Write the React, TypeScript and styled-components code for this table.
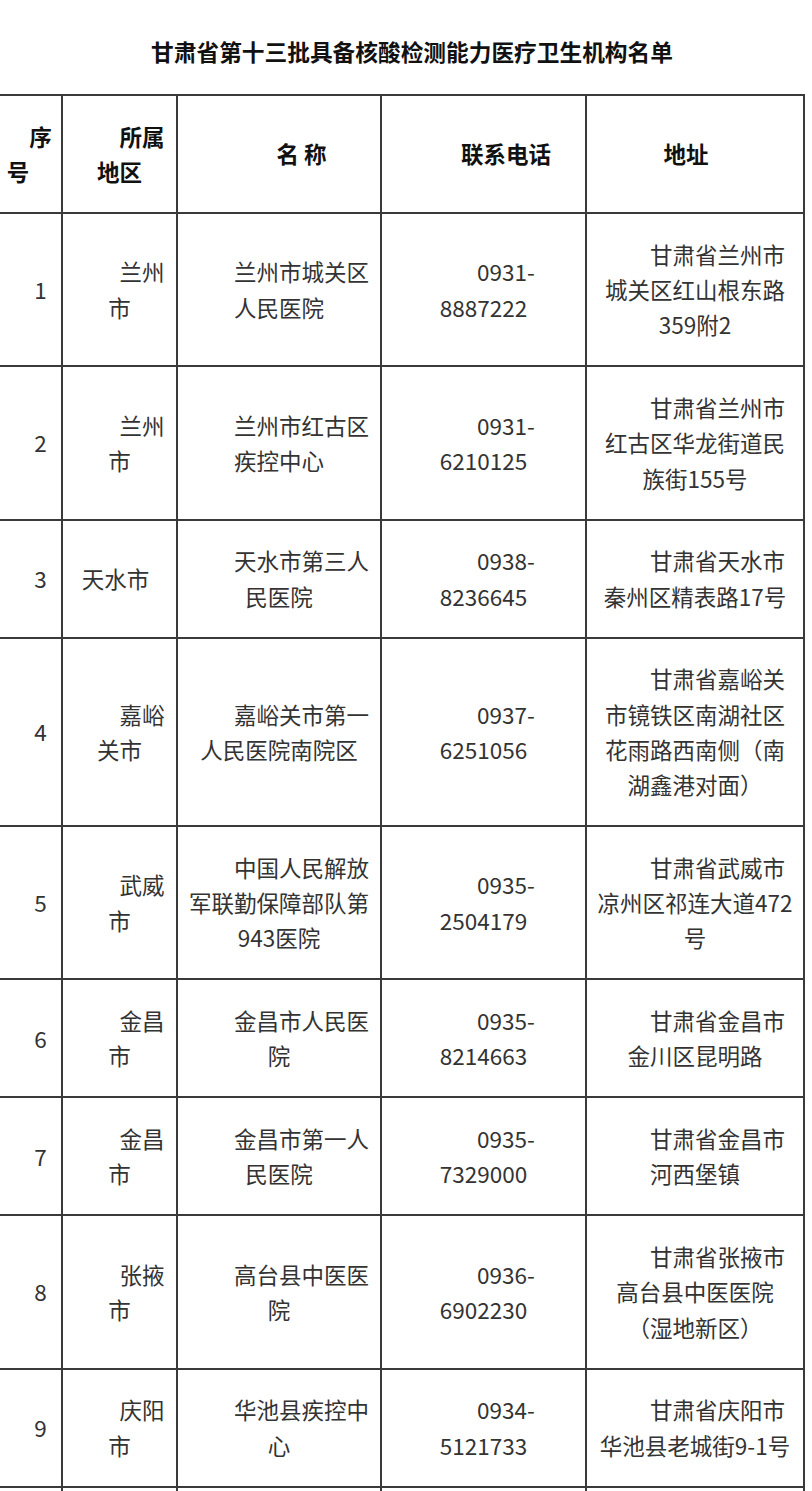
import React from 'react';
import styled, { createGlobalStyle } from 'styled-components';

type Row = {
  no: string;
  region: string;
  regionIndent?: number;
  name: string;
  phone: string;
  address: string;
};

const rows: Row[] = [
  { no: '1', region: '兰州市', name: '兰州市城关区人民医院', phone: '0931-8887222', address: '甘肃省兰州市城关区红山根东路359附2' },
  { no: '2', region: '兰州市', name: '兰州市红古区疾控中心', phone: '0931-6210125', address: '甘肃省兰州市红古区华龙街道民族街155号' },
  { no: '3', region: '天水市', regionIndent: -0.35, name: '天水市第三人民医院', phone: '0938-8236645', address: '甘肃省天水市秦州区精表路17号' },
  { no: '4', region: '嘉峪关市', name: '嘉峪关市第一人民医院南院区', phone: '0937-6251056', address: '甘肃省嘉峪关市镜铁区南湖社区花雨路西南侧（南湖鑫港对面）' },
  { no: '5', region: '武威市', name: '中国人民解放军联勤保障部队第943医院', phone: '0935-2504179', address: '甘肃省武威市凉州区祁连大道472号' },
  { no: '6', region: '金昌市', name: '金昌市人民医院', phone: '0935-8214663', address: '甘肃省金昌市金川区昆明路' },
  { no: '7', region: '金昌市', name: '金昌市第一人民医院', phone: '0935-7329000', address: '甘肃省金昌市河西堡镇' },
  { no: '8', region: '张掖市', name: '高台县中医医院', phone: '0936-6902230', address: '甘肃省张掖市高台县中医医院（湿地新区）' },
  { no: '9', region: '庆阳市', name: '华池县疾控中心', phone: '0934-5121733', address: '甘肃省庆阳市华池县老城街9-1号' },
];

const App: React.FC = () => (
  <>
    <GlobalStyle />
    <Page>
      <Title>甘肃省第十三批具备核酸检测能力医疗卫生机构名单</Title>
      <TableWrap>
        <Table>
          <colgroup>
            <col style={{ width: 88 }} />
            <col style={{ width: 115 }} />
            <col style={{ width: 204 }} />
            <col style={{ width: 205 }} />
            <col style={{ width: 218 }} />
          </colgroup>
          <thead>
            <tr>
              <HeadCell>序号</HeadCell>
              <HeadCell>所属地区</HeadCell>
              <HeadCell>名 称</HeadCell>
              <HeadCell>联系电话</HeadCell>
              <HeadCell indent={-0.8}>地址</HeadCell>
            </tr>
          </thead>
          <tbody>
            {rows.map((row) => {
              const [area, number] = row.phone.split('-');
              return (
                <tr key={row.no}>
                  <Cell>{row.no}</Cell>
                  <Cell indent={row.regionIndent}>{row.region}</Cell>
                  <Cell>{row.name}</Cell>
                  <Cell>
                    {area}-
                    <br />
                    {number}
                  </Cell>
                  <Cell>{row.address}</Cell>
                </tr>
              );
            })}
            <tr>
              <Cell />
              <Cell />
              <Cell />
              <Cell />
              <Cell />
            </tr>
          </tbody>
        </Table>
      </TableWrap>
    </Page>
  </>
);

const GlobalStyle = createGlobalStyle`
  html, body {
    margin: 0;
    padding: 0;
    background: #fff;
  }

  body {
    font-family: "Noto Sans CJK SC", "Noto Sans", sans-serif;
    color: #333;
  }
`;

const Page = styled.div`
  width: 812px;
  overflow: hidden;
  background: #fff;
`;

const Title = styled.h1`
  margin: 0;
  padding: 37px 0 0 12px;
  height: 94px;
  box-sizing: border-box;
  text-align: center;
  font-size: 22.7px;
  line-height: 30px;
  font-weight: 700;
  color: #111;
`;

const TableWrap = styled.div`
  margin-left: -27px;
  width: 832px;
`;

const Table = styled.table`
  table-layout: fixed;
  width: 830px;
  border-collapse: collapse;
`;

const Cell = styled.td<{ indent?: number }>`
  border: 2px solid #3a3a3a;
  padding: 22.75px 9px;
  font-size: 22.5px;
  line-height: 35.25px;
  text-align: center;
  text-indent: ${({ indent }) => (indent ?? 2)}em;
  vertical-align: middle;
  color: #333;
  word-break: normal;
  line-break: strict;
`;

const HeadCell = styled(Cell).attrs({ as: 'th' })`
  font-weight: 700;
  color: #111;
`;

export default App;
